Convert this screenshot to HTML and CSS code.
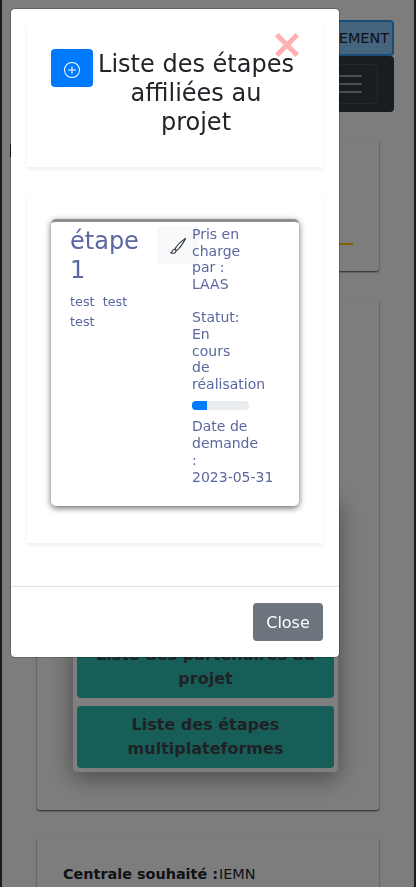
FILE: index.html
```
<!DOCTYPE html>
<html lang="fr">
<head>
<meta charset="utf-8">
<title>Projet</title>
<link rel="stylesheet" href="styles.css">
</head>
<body>
<div class="page">
  <header class="top">
    <div class="top-button">EMENT</div>
    <nav class="navbar">
      <div class="toggler">
        <svg width="30" height="30" viewBox="0 0 30 30"><path stroke="#fff" stroke-opacity=".5" stroke-linecap="round" stroke-width="2" d="M4 7h22M4 15h22M4 23h22"/></svg>
      </div>
    </nav>
  </header>
  <main class="cards">
    <section class="panel panel-title"><div class="accent"></div></section>
    <section class="panel panel-menu">
      <div class="menu">
        <div class="menu-button">Liste des partenaires au projet</div>
        <div class="menu-button">Liste des étapes multiplateformes</div>
      </div>
    </section>
    <section class="panel panel-info"><b>Centrale souhaité :</b>IEMN</section>
  </main>
  <div class="marker"></div>
</div>
<div class="backdrop">
  <div class="modal">
    <div class="modal-body">
      <section class="block block-head">
        <button class="btn btn-add">
          <svg width="16" height="16" viewBox="0 0 16 16" fill="currentColor"><path d="M8 15A7 7 0 1 1 8 1a7 7 0 0 1 0 14zm0 1A8 8 0 1 0 8 0a8 8 0 0 0 0 16z"/><path d="M8 4a.5.5 0 0 1 .5.5v3h3a.5.5 0 0 1 0 1h-3v3a.5.5 0 0 1-1 0v-3h-3a.5.5 0 0 1 0-1h3v-3A.5.5 0 0 1 8 4z"/></svg>
        </button>
        <h4 class="title">Liste des étapes affiliées au projet</h4>
        <svg class="dismiss" width="24" height="24" viewBox="0 0 24 24"><path d="M1.8 1.8l20.4 20.4M22.2 1.8l-20.4 20.4" stroke="#ffb0b0" stroke-width="5"/></svg>
      </section>
      <section class="block block-list">
        <article class="step">
          <div class="step-main">
            <h4 class="step-name">étape 1</h4>
            <p class="step-text">test&nbsp; test test</p>
          </div>
          <div class="btn btn-edit">
            <svg width="16" height="16" viewBox="0 0 16 16" fill="currentColor"><path d="M15.825.12a.5.5 0 0 1 .132.584c-1.53 3.43-4.743 8.17-7.095 10.64a6.067 6.067 0 0 1-2.373 1.534c-.018.227-.06.538-.16.868-.201.659-.667 1.479-1.708 1.74a8.118 8.118 0 0 1-3.078.132 3.659 3.659 0 0 1-.562-.135 1.382 1.382 0 0 1-.466-.247.714.714 0 0 1-.204-.288.622.622 0 0 1 .004-.443c.095-.245.316-.38.461-.452.394-.197.625-.453.867-.826.095-.144.184-.297.287-.472l.117-.198c.151-.255.326-.54.546-.848.528-.739 1.201-.925 1.746-.896.126.007.243.025.348.048.062-.172.142-.38.238-.608.261-.619.658-1.419 1.187-2.069 2.176-2.67 6.18-6.206 9.117-8.104a.5.5 0 0 1 .596.04zM4.705 11.912a1.23 1.23 0 0 0-.419-.1c-.246-.013-.573.05-.879.479-.197.275-.355.532-.5.777l-.105.177c-.106.181-.213.362-.32.528a3.39 3.39 0 0 1-.76.861c.69.112 1.736.111 2.657-.12.559-.139.843-.569.993-1.06a3.122 3.122 0 0 0 .126-.75l-.793-.792zm1.44.026c.12-.04.277-.1.458-.183a5.068 5.068 0 0 0 1.535-1.1c1.9-1.996 4.412-5.57 6.052-8.631-2.59 1.927-5.566 4.66-7.302 6.792-.442.543-.795 1.243-1.042 1.826-.121.288-.214.54-.275.72v.001l.575.575zm-4.973 3.04.007-.005a.031.031 0 0 1-.007.004zm3.582-3.043.002.001h-.002z"/></svg>
          </div>
          <div class="step-side">
            <p>Pris en charge par : LAAS</p>
            <p class="status">Statut: En cours de réalisation</p>
            <div class="progress"><div class="bar" style="width:26%"></div></div>
            <p class="date">Date de demande : <span class="nowrap">2023-05-31</span></p>
          </div>
        </article>
      </section>
    </div>
    <footer class="modal-footer"><button class="btn btn-close">Close</button></footer>
  </div>
</div>
</body>
</html>
```
FILE: styles.css
```
* { box-sizing: border-box; }
html, body { height: 100%; overflow: hidden; }
body {
  margin: 0;
  font: 16px/24px "DejaVu Sans", sans-serif;
  color: #212529;
  background: #fbfbfb;
}
h4, p { margin: 0; font-weight: 400; }

.page {
  position: relative;
  height: 887px;
  overflow: hidden;
  padding: 20px 20px 0 35px;
  border: solid #343a40;
  border-width: 0 2px;
}
/* Edge of the collapsed side tab, mostly covered by the dialog */
.marker {
  position: absolute;
  top: 144px;
  left: 8px;
  width: 4px;
  height: 13px;
  background: #343a40;
}
.top { display: flex; flex-direction: column; }
.top-button {
  height: 36px;
  padding: 0 3px;
  border: 2px solid #3498f4;
  border-radius: 4px;
  background: #8bc8fa;
  font-size: 14.4px;
  line-height: 33px;
  text-align: right;
}
.navbar {
  display: flex;
  justify-content: flex-end;
  height: 56px;
  padding: 8px 16px;
  border-radius: 4px;
  background: #343a40;
}
.toggler {
  display: flex;
  height: 40px;
  padding: 4px 12px;
  border: 1px solid rgba(255, 255, 255, .1);
  border-radius: 4px;
}
.cards { margin-top: 28px; padding-right: 15px; }
.panel {
  border-radius: 3px;
  background: #fbfbfb;
  box-shadow: 0 1px 2px rgba(0, 0, 0, .7);
}
.panel-title { height: 131px; padding: 103px 26px 0; }
.accent { height: 2px; background: #ffc107; }
.panel-menu {
  display: flex;
  flex-direction: column;
  justify-content: flex-end;
  height: 510px;
  margin-top: 29px;
  padding: 0 41px 38px 36px;
}
.menu {
  display: flex;
  flex-direction: column;
  justify-content: flex-end;
  gap: 8px;
  height: 275px;
  padding: 4px;
  border-radius: 4px;
  background: #fff;
  box-shadow: 0 6px 24px rgba(0, 0, 0, .42);
}
.menu-button {
  padding: 7px 12px;
  border-radius: 4px;
  background: #30bcb0;
  color: #3f4549;
  font-weight: 700;
  text-align: center;
}
.panel-info {
  height: 120px;
  margin-top: 28px;
  padding: 24px 26px;
  font-size: 14.4px;
}
.panel-info b { margin-right: 1px; }

.backdrop {
  position: fixed;
  inset: 0;
  padding: 8px 0 0 10px;
  background: rgba(0, 0, 0, .5);
}
.modal {
  width: 330px;
  border: 1px solid rgba(0, 0, 0, .2);
  border-radius: 5px;
  background: #fff;
  background-clip: padding-box;
}
.modal-body { height: 577px; padding: 16px; }
.block { padding: 24px; box-shadow: 0 2px 4px rgba(0, 0, 0, .075); }
.block-head {
  position: relative;
  display: flex;
  align-items: flex-start;
  height: 142px;
}
.btn {
  flex: none;
  height: 38px;
  padding: 7px 13px;
  border: 0;
  border-radius: 4px;
  font: inherit;
}
.btn svg { display: block; }
.btn-add { padding-top: 11px; background: #007bff; color: #fff; }
.title {
  flex: 1;
  padding-top: 1px;
  font-size: 24px;
  line-height: 28.8px;
  text-align: center;
}
.dismiss { position: absolute; top: 8px; right: 24px; }
.block-list { height: 348px; margin-top: 28px; }
.step {
  display: flex;
  height: 287px;
  padding: 4px 19px 0;
  border-top: 3px solid #8f8f8f;
  border-radius: 5px;
  box-shadow: 0 2px 6px rgba(0, 0, 0, .6);
  color: #5a689f;
}
.step-main { width: 87px; padding: 1px 15px 0 0; }
.step-name { font-size: 24px; line-height: 28.8px; }
.step-text { margin-top: 7px; font-size: 12.8px; line-height: 20px; }
.btn-edit {
  width: 42px;
  padding-top: 12px;
  background: #f8f9fa;
  color: #212529;
}
.step-side {
  width: 57px;
  margin-left: -7px;
  font-size: 14px;
  line-height: 16.7px;
}
.status { margin-top: 16.5px; }
.progress {
  height: 9px;
  margin: 8px 0;
  overflow: hidden;
  border-radius: 4px;
  background: #e9ecef;
}
.bar { height: 100%; background: #007bff; }
.date { line-height: 17px; }
.nowrap { white-space: nowrap; }
.modal-footer {
  display: flex;
  justify-content: flex-end;
  padding: 16px;
  border-top: 1px solid #dee2e6;
}
.btn-close { padding: 8px 0 6px; width: 70px; background: #6c757d; color: #fff; }
```
